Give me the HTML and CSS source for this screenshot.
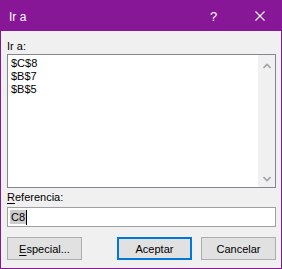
FILE: index.html
```html
<!DOCTYPE html>
<html lang="es">
<head>
  <meta charset="UTF-8">
  <title>Ir a</title>
  <link rel="stylesheet" href="styles.css">
</head>
<body>

  <div class="dialog">
    <div class="titlebar">
      <span class="title">Ir a</span>
      <span class="title-btn help">?</span>
      <span class="title-btn close">
        <svg width="10" height="10" viewBox="0 0 10 10">
          <path d="M0.5 0.5 L9.5 9.5 M9.5 0.5 L0.5 9.5" stroke="#fff" stroke-width="1.1" fill="none"/>
        </svg>
      </span>
    </div>

    <div class="dialog-body">
      <div class="label first">Ir a:</div>
      <div class="listbox">
        <div class="list-items">
          <div class="item">$C$8</div>
          <div class="item">$B$7</div>
          <div class="item">$B$5</div>
        </div>
        <div class="scrollbar">
          <div class="arrow up">
            <svg width="8" height="6" viewBox="0 0 8 6">
              <polyline points="0.5,5 4,1.5 7.5,5" stroke="#a3a3a3" stroke-width="1.6" fill="none"/>
            </svg>
          </div>
          <div class="arrow down">
            <svg width="8" height="6" viewBox="0 0 8 6">
              <polyline points="0.5,1 4,4.5 7.5,1" stroke="#a3a3a3" stroke-width="1.6" fill="none"/>
            </svg>
          </div>
        </div>
      </div>

      <div class="label"><u>R</u>eferencia:</div>
      <div class="textbox"><span class="selected">C8</span><span class="caret"></span></div>

      <div class="buttons">
        <button class="btn"><u>E</u>special...</button>
        <button class="btn primary">Aceptar</button>
        <button class="btn">Cancelar</button>
      </div>
    </div>
  </div>

</body>
</html>
```

FILE: styles.css
```css
/* Ventana de dialogo */
body {
  margin: 0;
  background: #f0f0f0;
  font-family: "Liberation Sans", Arial, sans-serif;
  font-size: 11px;
  color: #000;
}

.dialog {
  width: 280px;
  height: 268px;
  border: 1px solid #881798;
  border-top: none;
  background: #f0f0f0;
  display: flex;
  flex-direction: column;
}

/* Barra de titulo */
.titlebar {
  height: 31px;
  margin: 0 -1px;
  background: #881798;
  color: #fff;
  display: flex;
  align-items: center;
  font-size: 12px;
}

.title {
  flex: 1;
  padding-left: 9px;
  padding-top: 2px;
}

.title-btn {
  width: 45px;
  height: 31px;
  display: flex;
  align-items: center;
  justify-content: center;
}

.help {
  font-size: 13px;
  padding-top: 1px;
}

.close {
  padding-left: 1px;
}

/* Contenido */
.dialog-body {
  flex: 1;
  padding: 0 5px 0 6px;
  display: flex;
  flex-direction: column;
}

.label {
  line-height: 15px;
  margin: 2px 0 2px;
}

.label.first {
  margin: 8px 0 0;
}

.label u {
  text-underline-offset: 2px;
}

/* Lista de referencias */
.listbox {
  height: 132px;
  border: 1px solid #828790;
  background: #fff;
  display: flex;
}

.list-items {
  flex: 1;
  padding: 2px 0 0 3px;
}

.item {
  line-height: 13px;
}

.scrollbar {
  width: 17px;
  background: #f0f0f0;
  display: flex;
  flex-direction: column;
  justify-content: space-between;
}

.arrow {
  height: 17px;
  display: flex;
  align-items: center;
  justify-content: center;
}

.arrow.up {
  margin-top: 2px;
}

/* Cuadro de texto */
.textbox {
  height: 18px;
  border: 1px solid #a0a0a0;
  background: #fff;
  display: flex;
  align-items: center;
  padding-left: 2px;
}

.selected {
  background: #cccccc;
  line-height: 14px;
  padding: 0 1px;
}

.caret {
  width: 1px;
  height: 15px;
  background: #000;
}

/* Botones */
.buttons {
  display: flex;
  margin-top: 10px;
}

.btn {
  width: 75px;
  height: 23px;
  background: #e1e1e1;
  border: 1px solid #adadad;
  font-family: "Liberation Sans", Arial, sans-serif;
  font-size: 11px;
  color: #000;
  padding: 0;
}

.btn.primary {
  margin-left: auto;
  margin-right: 9px;
  border: 2px solid #0078d7;
}

.btn u {
  text-underline-offset: 2px;
}
```
